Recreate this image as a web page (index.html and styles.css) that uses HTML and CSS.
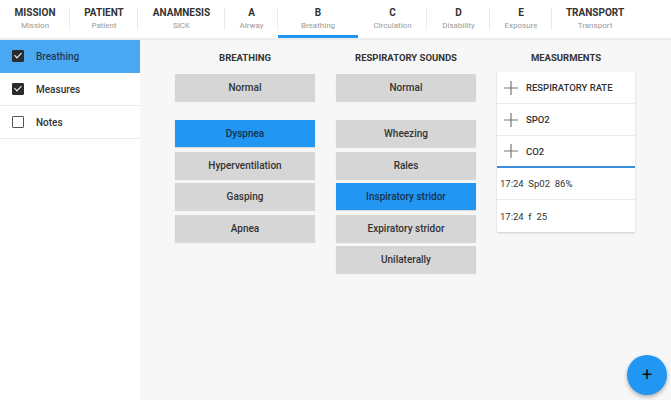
FILE: index.html
```html
<!DOCTYPE html>
<html>
<head>
<meta charset="utf-8">
<link rel="stylesheet" href="styles.css">
</head>
<body>
<div class="tabs">
  <div class="tab"><b>MISSION</b><span>Mission</span></div>
  <div class="tab"><b>PATIENT</b><span>Patient</span></div>
  <div class="tab"><b>ANAMNESIS</b><span>SICK</span></div>
  <div class="tab"><b>A</b><span>Airway</span></div>
  <div class="tab active"><b>B</b><span>Breathing</span></div>
  <div class="tab"><b>C</b><span>Circulation</span></div>
  <div class="tab"><b>D</b><span>Disability</span></div>
  <div class="tab"><b>E</b><span>Exposure</span></div>
  <div class="tab last"><b>TRANSPORT</b><span>Transport</span></div>
</div>

<div class="layout">
  <div class="sidebar">
    <div class="item selected"><span class="box checked"></span>Breathing</div>
    <div class="item"><span class="box checked"></span>Measures</div>
    <div class="item"><span class="box"></span>Notes</div>
  </div>

  <div class="main">
    <div class="column">
      <h3>BREATHING</h3>
      <div class="btn">Normal</div>
      <div class="btn spaced on">Dyspnea</div>
      <div class="btn">Hyperventilation</div>
      <div class="btn">Gasping</div>
      <div class="btn">Apnea</div>
    </div>

    <div class="column">
      <h3>RESPIRATORY SOUNDS</h3>
      <div class="btn">Normal</div>
      <div class="btn spaced">Wheezing</div>
      <div class="btn">Rales</div>
      <div class="btn on">Inspiratory stridor</div>
      <div class="btn">Expiratory stridor</div>
      <div class="btn">Unilaterally</div>
    </div>

    <div class="column narrow">
      <h3>MEASURMENTS</h3>
      <div class="card">
        <div class="row add"><svg width="16" height="16" viewBox="0 0 16 16"><path d="M8 1v14M1 8h14" stroke="#777" stroke-width="1.2"/></svg>RESPIRATORY RATE</div>
        <div class="row add"><svg width="16" height="16" viewBox="0 0 16 16"><path d="M8 1v14M1 8h14" stroke="#777" stroke-width="1.2"/></svg>SPO2</div>
        <div class="row add last-add"><svg width="16" height="16" viewBox="0 0 16 16"><path d="M8 1v14M1 8h14" stroke="#777" stroke-width="1.2"/></svg>CO2</div>
        <div class="row log">17:24  Sp02  86%</div>
        <div class="row log">17:24  f  25</div>
      </div>
    </div>
  </div>
</div>

<div class="fab">+</div>
</body>
</html>
```

FILE: styles.css
```css
body {
  margin: 0;
  font-family: Roboto, "Liberation Sans", sans-serif;
  background: #f7f7f7;
  color: #333;
  height: 400px;
  overflow: hidden;
}

/* top tab strip */
.tabs {
  display: grid;
  grid-template-columns: 70px 68px 87px 53px 80px 69px 63px 62px 86px;
  height: 38px;
  background: #fff;
  border-bottom: 2px solid #ececec;
}

.tab {
  display: flex;
  flex-direction: column;
  align-items: center;
  padding-top: 7px;
  box-sizing: border-box;
  background: linear-gradient(#ebebeb, #ebebeb) right center / 1px 22px no-repeat;
}

.tab b {
  font-size: 10px;
  font-weight: 700;
  color: #333;
  line-height: 11px;
}

.tab span {
  font-size: 8px;
  color: #9a9a9a;
  line-height: 10px;
  margin-top: 3px;
}

.tab.active {
  border-bottom: 3px solid #2196f3;
  background: none;
}

.tab.last {
  background: none;
}

.layout {
  display: flex;
  height: 360px;
}

/* left list */
.sidebar {
  width: 140px;
  background: #fff;
  flex-shrink: 0;
}

.item {
  display: flex;
  align-items: center;
  height: 32px;
  padding-left: 12px;
  font-size: 10px;
  font-weight: 500;
  border-bottom: 1px solid #ececec;
}

.item.selected {
  background: #4aa7f2;
  color: #1f3c58;
  border-bottom-color: #4aa7f2;
}

.box {
  width: 10px;
  height: 10px;
  border: 1.5px solid #555;
  border-radius: 1px;
  margin-right: 12px;
  position: relative;
}

.box.checked {
  background: #2b2b2b;
  border-color: #2b2b2b;
}

.box.checked::after {
  content: "";
  position: absolute;
  left: 3px;
  top: 0px;
  width: 3px;
  height: 6px;
  border: solid #fff;
  border-width: 0 1.5px 1.5px 0;
  transform: rotate(45deg);
}

/* content columns */
.main {
  display: flex;
  gap: 21px;
  padding: 10px 0 0 35px;
}

.column {
  width: 140px;
}

.column.narrow {
  width: 138px;
}

h3 {
  margin: 0 0 8px;
  font-size: 9.5px;
  font-weight: 700;
  line-height: 16px;
  text-align: center;
  color: #333;
}

.btn {
  height: 27px;
  line-height: 27px;
  margin-bottom: 4.5px;
  background: #d6d6d6;
  text-align: center;
  font-size: 10px;
  font-weight: 500;
  color: #333;
  box-shadow: 0 1px 1px rgba(0,0,0,0.12);
}

.btn.spaced {
  margin-top: 19px;
}

.btn.on {
  background: #2196f3;
  color: #17324d;
}

.card {
  margin-top: -2px;
  background: #fff;
  box-shadow: 0 1px 2px rgba(0,0,0,0.18);
}

.row {
  display: flex;
  align-items: center;
  height: 32px;
  border-bottom: 1px solid #ececec;
  box-sizing: border-box;
}

.row.add {
  padding-left: 6px;
  font-size: 9.5px;
  font-weight: 500;
  color: #333;
}

.row.add svg {
  margin-right: 7px;
}

.row.last-add {
  border-bottom: 2px solid #3a8fdc;
}

.row.log {
  padding-left: 3px;
  font-size: 9.5px;
  white-space: pre;
  color: #333;
}

.row.log:last-child {
  border-bottom: none;
}

/* floating action button */
.fab {
  position: absolute;
  left: 627px;
  top: 355px;
  width: 40px;
  height: 40px;
  border-radius: 50%;
  background: #2196f3;
  box-shadow: 0 2px 4px rgba(0,0,0,0.3);
  color: #111;
  font-size: 18px;
  line-height: 40px;
  text-align: center;
}
```
